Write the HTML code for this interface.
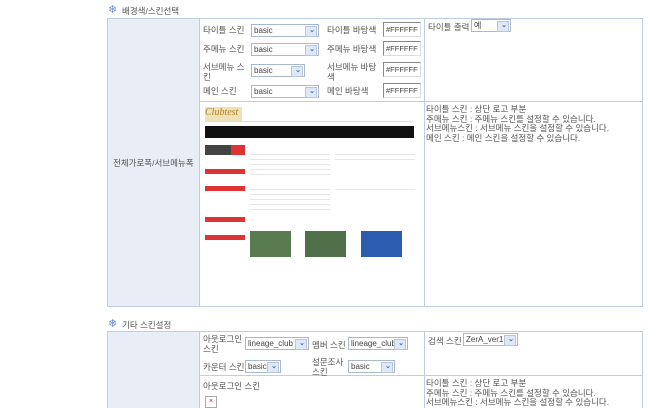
<!DOCTYPE html>
<html><head><meta charset="utf-8"><style>
html,body{margin:0;width:650px;height:408px;overflow:hidden}
#w{position:relative;width:650px;height:408px;overflow:hidden}
body{background:#fff;font-family:"Liberation Sans","Noto Sans CJK KR",sans-serif;font-size:8.5px;color:#555}
.a{position:absolute}
.lab{background:#e8edf6}
.bd{border:1px solid #bccde6;box-sizing:border-box}
.sel{position:absolute;height:13px;border:1px solid #a9b8cc;background:#fff;box-sizing:border-box;font-size:8px;line-height:11px;padding-left:2px;color:#444}
.sel:after{content:"";position:absolute;right:1px;top:1px;width:10px;height:9px;background:#dfe8f6;border:1px solid #b7c6dd}
.sel b{position:absolute;right:3px;top:0;font-size:7px;color:#3a6cc0;z-index:2;font-weight:bold}
.inp{position:absolute;height:15px;border:1px solid #888;border-right-color:#ddd;border-bottom-color:#ddd;box-sizing:border-box;font-size:7.5px;line-height:13px;padding-left:2px;color:#444;width:38px}
.t{position:absolute;line-height:10px;color:#555}
.star{position:absolute;color:#6a8fd0;font-size:11px;line-height:11px}
</style></head><body><div id="w">
<div class="star" style="left:108px;top:5px">❄</div><div class="t" style="left:122px;top:6px">배경색/스킨선택</div>
<div class="a lab bd" style="left:107px;top:18px;width:93px;height:289px"></div>
<div class="a bd" style="left:199px;top:18px;width:226px;height:84px"></div>
<div class="a bd" style="left:424px;top:18px;width:219px;height:84px"></div>
<div class="a bd" style="left:199px;top:101px;width:226px;height:206px"></div>
<div class="a bd" style="left:424px;top:101px;width:219px;height:206px"></div>
<div class="t" style="left:113px;top:158px">전체가로폭/서브메뉴폭</div>
<div class="t" style="left:203px;top:25px">타이틀 스킨</div>
<div class="sel" style="left:251px;top:24px;width:68px">basic<b>⌄</b></div>
<div class="t" style="left:327px;top:25px">타이틀 바탕색</div>
<div class="inp" style="left:383px;top:22px">#FFFFFF</div>
<div class="t" style="left:203px;top:44px">주메뉴 스킨</div>
<div class="sel" style="left:251px;top:43px;width:68px">basic<b>⌄</b></div>
<div class="t" style="left:327px;top:44px">주메뉴 바탕색</div>
<div class="inp" style="left:383px;top:41px">#FFFFFF</div>
<div class="t" style="left:203px;top:62px;width:50px">서브메뉴 스<br>킨</div>
<div class="sel" style="left:251px;top:64px;width:54px">basic<b>⌄</b></div>
<div class="t" style="left:327px;top:62px;width:55px">서브메뉴 바탕<br>색</div>
<div class="inp" style="left:383px;top:62px">#FFFFFF</div>
<div class="t" style="left:203px;top:86px">메인 스킨</div>
<div class="sel" style="left:251px;top:85px;width:68px">basic<b>⌄</b></div>
<div class="t" style="left:327px;top:86px">메인 바탕색</div>
<div class="inp" style="left:383px;top:83px">#FFFFFF</div>
<div class="t" style="left:428px;top:22px">타이틀 출력</div>
<div class="sel" style="left:471px;top:19px;width:40px">예<b>⌄</b></div>
<div class="t" style="left:426px;top:105px;line-height:9.5px">타이틀 스킨 : 상단 로고 부분<br>주메뉴 스킨 : 주메뉴 스킨를 설정할 수 있습니다.<br>서브메뉴스킨 : 서브메뉴 스킨을 설정할 수 있습니다.<br>메인 스킨 : 메인 스킨을 설정할 수 있습니다.</div>
<div class="a" style="left:205px;top:107px;width:37px;height:14px;background:#f0e2b8;color:#b08020;font-family:'Liberation Serif',serif;font-style:italic;font-size:10px;line-height:12px">Clubtest</div>
<div class="a" style="left:205px;top:121px;width:208px;height:1px;background:#ddd"></div>
<div class="a" style="left:205px;top:126px;width:209px;height:12px;background:#111"></div>
<div class="a" style="left:205px;top:145px;width:40px;height:10px;background:#444"></div>
<div class="a" style="left:231px;top:145px;width:14px;height:10px;background:#d33"></div>
<div class="a" style="left:205px;top:169px;width:40px;height:5px;background:#d33"></div>
<div class="a" style="left:205px;top:186px;width:40px;height:5px;background:#d33"></div>
<div class="a" style="left:205px;top:217px;width:40px;height:5px;background:#d33"></div>
<div class="a" style="left:205px;top:235px;width:40px;height:5px;background:#d33"></div>
<div class="a" style="left:250px;top:150px;width:80px;height:25px;background:repeating-linear-gradient(#fff 0 4px,#e6e6e6 4px 5px)"></div>
<div class="a" style="left:335px;top:150px;width:80px;height:10px;background:repeating-linear-gradient(#fff 0 4px,#e6e6e6 4px 5px)"></div>
<div class="a" style="left:250px;top:185px;width:80px;height:28px;background:repeating-linear-gradient(#fff 0 4px,#e6e6e6 4px 5px)"></div>
<div class="a" style="left:335px;top:185px;width:80px;height:8px;background:repeating-linear-gradient(#fff 0 4px,#e6e6e6 4px 5px)"></div>
<div class="a" style="left:250px;top:231px;width:41px;height:26px;background:#5a7a50"></div>
<div class="a" style="left:305px;top:231px;width:41px;height:26px;background:#4f7048"></div>
<div class="a" style="left:361px;top:231px;width:41px;height:26px;background:#2c5cb0"></div>
<div class="star" style="left:108px;top:319px">❄</div><div class="t" style="left:122px;top:320px">기타 스킨설정</div>
<div class="a lab bd" style="left:107px;top:331px;width:93px;height:100px"></div>
<div class="a bd" style="left:199px;top:331px;width:226px;height:45px"></div>
<div class="a bd" style="left:424px;top:331px;width:219px;height:45px"></div>
<div class="a bd" style="left:199px;top:375px;width:226px;height:56px"></div>
<div class="a bd" style="left:424px;top:375px;width:219px;height:56px"></div>
<div class="t" style="left:203px;top:334px">아웃로그인<br>스킨</div>
<div class="sel" style="left:245px;top:337px;width:64px">lineage_club<b>⌄</b></div>
<div class="t" style="left:312px;top:340px">멤버 스킨</div>
<div class="sel" style="left:348px;top:337px;width:60px">lineage_club<b>⌄</b></div>
<div class="t" style="left:203px;top:362px">카운터 스킨</div>
<div class="sel" style="left:245px;top:360px;width:36px">basic<b>⌄</b></div>
<div class="t" style="left:312px;top:357px">설문조사<br>스킨</div>
<div class="sel" style="left:348px;top:360px;width:47px">basic<b>⌄</b></div>
<div class="t" style="left:428px;top:336px">검색 스킨</div>
<div class="sel" style="left:463px;top:333px;width:55px">ZerA_ver1<b>⌄</b></div>
<div class="t" style="left:203px;top:381px">아웃로그인 스킨</div>
<div class="a" style="left:205px;top:396px;width:10px;height:10px;border:1px solid #aaa;color:#d00;font-size:7px;line-height:10px;text-align:center">×</div>
<div class="t" style="left:426px;top:379px;line-height:9.5px">타이틀 스킨 : 상단 로고 부분<br>주메뉴 스킨 : 주메뉴 스킨를 설정할 수 있습니다.<br>서브메뉴스킨 : 서브메뉴 스킨을 설정할 수 있습니다.</div>
</div></body></html>
